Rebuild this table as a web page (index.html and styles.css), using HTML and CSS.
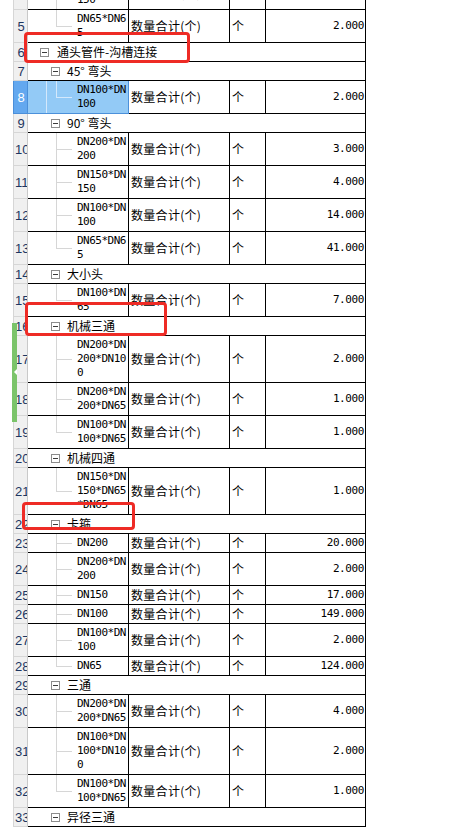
FILE: index.html
```html
<!DOCTYPE html>
<html lang="zh-CN">
<head>
<meta charset="utf-8">
<title>工程量表</title>
<link rel="stylesheet" href="styles.css">
</head>
<body>
<div class="sheet">
  <div class="rows">
    <div class="row"><div class="rh"><span>4</span></div><div class="tree">DN150*DN150</div><div class="qty">数量合计(个)</div><div class="unit">个</div><div class="val">2.000</div></div>
    <div class="row"><div class="rh"><span>5</span></div><div class="tree last">DN65*DN65</div><div class="qty">数量合计(个)</div><div class="unit">个</div><div class="val">2.000</div></div>
    <div class="row"><div class="rh"><span>6</span></div><div class="grp l1"><i class="box"></i>通头管件-沟槽连接</div></div>
    <div class="row"><div class="rh"><span>7</span></div><div class="grp l2"><i class="box"></i>45° 弯头</div></div>
    <div class="row"><div class="rh sel"><span>8</span></div><div class="tree last sel">DN100*DN100</div><div class="qty">数量合计(个)</div><div class="unit">个</div><div class="val">2.000</div></div>
    <div class="row"><div class="rh"><span>9</span></div><div class="grp l2"><i class="box"></i>90° 弯头</div></div>
    <div class="row"><div class="rh"><span>10</span></div><div class="tree">DN200*DN200</div><div class="qty">数量合计(个)</div><div class="unit">个</div><div class="val">3.000</div></div>
    <div class="row"><div class="rh"><span>11</span></div><div class="tree">DN150*DN150</div><div class="qty">数量合计(个)</div><div class="unit">个</div><div class="val">4.000</div></div>
    <div class="row"><div class="rh"><span>12</span></div><div class="tree">DN100*DN100</div><div class="qty">数量合计(个)</div><div class="unit">个</div><div class="val">14.000</div></div>
    <div class="row"><div class="rh"><span>13</span></div><div class="tree last">DN65*DN65</div><div class="qty">数量合计(个)</div><div class="unit">个</div><div class="val">41.000</div></div>
    <div class="row"><div class="rh"><span>14</span></div><div class="grp l2"><i class="box"></i>大小头</div></div>
    <div class="row"><div class="rh"><span>15</span></div><div class="tree last">DN100*DN65</div><div class="qty">数量合计(个)</div><div class="unit">个</div><div class="val">7.000</div></div>
    <div class="row"><div class="rh"><span>16</span></div><div class="grp l2"><i class="box"></i>机械三通</div></div>
    <div class="row"><div class="rh"><span>17</span></div><div class="tree">DN200*DN200*DN100</div><div class="qty">数量合计(个)</div><div class="unit">个</div><div class="val">2.000</div></div>
    <div class="row"><div class="rh"><span>18</span></div><div class="tree">DN200*DN200*DN65</div><div class="qty">数量合计(个)</div><div class="unit">个</div><div class="val">1.000</div></div>
    <div class="row"><div class="rh"><span>19</span></div><div class="tree last">DN100*DN100*DN65</div><div class="qty">数量合计(个)</div><div class="unit">个</div><div class="val">1.000</div></div>
    <div class="row"><div class="rh"><span>20</span></div><div class="grp l2"><i class="box"></i>机械四通</div></div>
    <div class="row"><div class="rh"><span>21</span></div><div class="tree last">DN150*DN150*DN65*DN65</div><div class="qty">数量合计(个)</div><div class="unit">个</div><div class="val">1.000</div></div>
    <div class="row"><div class="rh"><span>22</span></div><div class="grp l2"><i class="box"></i>卡箍</div></div>
    <div class="row"><div class="rh"><span>23</span></div><div class="tree">DN200</div><div class="qty">数量合计(个)</div><div class="unit">个</div><div class="val">20.000</div></div>
    <div class="row"><div class="rh"><span>24</span></div><div class="tree">DN200*DN200</div><div class="qty">数量合计(个)</div><div class="unit">个</div><div class="val">2.000</div></div>
    <div class="row"><div class="rh"><span>25</span></div><div class="tree">DN150</div><div class="qty">数量合计(个)</div><div class="unit">个</div><div class="val">17.000</div></div>
    <div class="row"><div class="rh"><span>26</span></div><div class="tree">DN100</div><div class="qty">数量合计(个)</div><div class="unit">个</div><div class="val">149.000</div></div>
    <div class="row"><div class="rh"><span>27</span></div><div class="tree">DN100*DN100</div><div class="qty">数量合计(个)</div><div class="unit">个</div><div class="val">2.000</div></div>
    <div class="row"><div class="rh"><span>28</span></div><div class="tree last">DN65</div><div class="qty">数量合计(个)</div><div class="unit">个</div><div class="val">124.000</div></div>
    <div class="row"><div class="rh"><span>29</span></div><div class="grp l2"><i class="box"></i>三通</div></div>
    <div class="row"><div class="rh"><span>30</span></div><div class="tree">DN200*DN200*DN65</div><div class="qty">数量合计(个)</div><div class="unit">个</div><div class="val">4.000</div></div>
    <div class="row"><div class="rh"><span>31</span></div><div class="tree">DN100*DN100*DN100</div><div class="qty">数量合计(个)</div><div class="unit">个</div><div class="val">2.000</div></div>
    <div class="row"><div class="rh"><span>32</span></div><div class="tree last">DN100*DN100*DN65</div><div class="qty">数量合计(个)</div><div class="unit">个</div><div class="val">1.000</div></div>
    <div class="row"><div class="rh"><span>33</span></div><div class="grp l2"><i class="box"></i>异径三通</div></div>
    <div class="row"><div class="rh"><span>34</span></div><div class="tree">DN65*DN65</div><div class="qty">数量合计(个)</div><div class="unit">个</div><div class="val">1.000</div></div>
  </div>
  <div class="mark m1"></div>
  <div class="mark m2"></div>
  <div class="mark m3"></div>
  <div class="scrollmark"></div>
</div>
</body>
</html>
```
FILE: styles.css
```css
html, body {
  margin: 0;
  padding: 0;
  background: #fff;
}
body {
  width: 468px;
  height: 827px;
  overflow: hidden;
  font-family: "Noto Sans CJK SC", sans-serif;
  color: #000;
}
.sheet {
  position: relative;
  height: 827px;
  overflow: hidden;
}
.rows {
  margin: -23px 0 0 13px;
  width: 353px;
}
.row {
  display: grid;
  grid-template-columns: 15px 101px 101px 36px 100px;
}
.rh {
  display: flex;
  align-items: center;
  overflow: hidden;
  padding-left: 1px;
  background: #f0f0f0;
  border-left: 1px solid #d6d6d6;
  border-right: 1px solid #c9c9c9;
  border-bottom: 1px solid #d6d6d6;
  font: 13px "Liberation Sans", sans-serif;
  color: #1d3661;
}
.rh span {
  width: 100%;
  text-align: center;
  white-space: nowrap;
}
.rh.sel {
  background: #63a8ef;
  color: #fff;
  border-color: #4b8fd9;
}
.tree {
  padding: 2px 0 2px 49px;
  border-right: 1px solid #000;
  border-bottom: 1px solid #000;
  font: 11px/14px "DejaVu Sans Mono", monospace;
  letter-spacing: -0.5px;
  color: #000;
  word-break: break-all;
  background:
    linear-gradient(#d6d6d6, #d6d6d6) 28px 0 / 1px 100% no-repeat,
    linear-gradient(#d6d6d6, #d6d6d6) 28px 50% / 16px 1px no-repeat;
}
.tree.last {
  background:
    linear-gradient(#d6d6d6, #d6d6d6) 28px 0 / 1px 50% no-repeat,
    linear-gradient(#d6d6d6, #d6d6d6) 28px 50% / 16px 1px no-repeat;
}
.tree.sel {
  border-color: #4b90da;
  background:
    linear-gradient(#d4e8fb, #d4e8fb) 18px 0 / 1px 100% no-repeat,
    linear-gradient(#d4e8fb, #d4e8fb) 28px 0 / 1px 50% no-repeat,
    linear-gradient(#d4e8fb, #d4e8fb) 28px 50% / 16px 1px no-repeat,
    #93caf6;
}
.qty, .unit, .val {
  display: flex;
  align-items: center;
  border-right: 1px solid #000;
  border-bottom: 1px solid #000;
  white-space: nowrap;
  overflow: hidden;
}
.qty, .unit {
  padding-left: 2px;
  font-size: 12px;
  line-height: 14px;
}
.qty {
  letter-spacing: 0.3px;
}
.val {
  justify-content: flex-end;
  padding-right: 1px;
  font: 11px/14px "DejaVu Sans Mono", monospace;
  letter-spacing: -0.4px;
}
.grp {
  grid-column: 2 / -1;
  display: flex;
  align-items: center;
  padding: 2px 0 2px 12px;
  border-right: 1px solid #000;
  border-bottom: 1px solid #000;
  font-size: 12px;
  line-height: 14px;
  white-space: nowrap;
}
.grp.l2 {
  padding-left: 23px;
}
.box {
  flex: none;
  width: 7px;
  height: 7px;
  margin-right: 8px;
  border: 1px solid #8c8c8c;
  background: linear-gradient(#3c3c3c, #3c3c3c) center / 5px 1px no-repeat, #fff;
}
.grp.l2 .box {
  margin-right: 7px;
}
.mark {
  position: absolute;
  box-sizing: border-box;
  border: 3px solid #ee2b25;
  border-radius: 4px;
}
.m1 { left: 24px; top: 32px; width: 166px; height: 31px; }
.m2 { left: 25px; top: 302px; width: 142px; height: 34px; }
.m3 { left: 22px; top: 502px; width: 113px; height: 28px; }
.scrollmark {
  position: absolute;
  left: 12px;
  top: 323px;
  width: 5px;
  height: 99px;
  background: #7bc46a;
}
.scrollmark::after {
  content: "";
  position: absolute;
  left: 2px;
  top: 46px;
  border-top: 3px solid transparent;
  border-bottom: 3px solid transparent;
  border-right: 3px solid #fff;
}
```
